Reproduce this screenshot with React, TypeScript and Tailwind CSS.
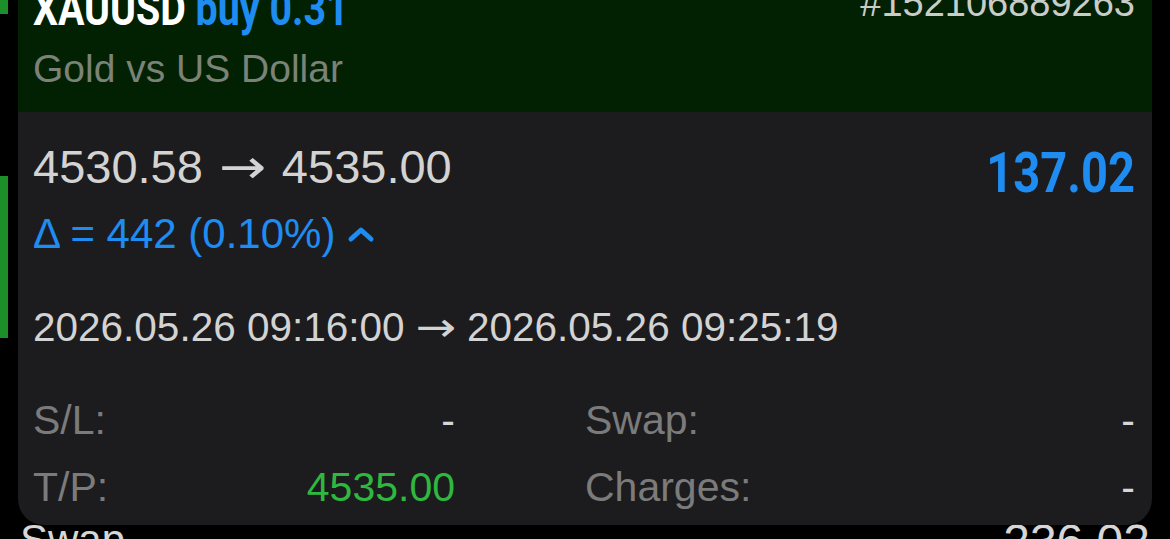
const SANS = "font-['Liberation_Sans',Arial,sans-serif]";
const COND = "font-['Roboto','Liberation_Sans',sans-serif] font-bold";

function Arrow({ width }: { width: string }) {
  return (
    <span className={`inline-block text-center font-['DejaVu_Sans',sans-serif] ${width}`}>
      <span className="inline-block scale-x-[1.2]">→</span>
    </span>
  );
}

function ChevronUp() {
  return (
    <svg width="28" height="18" viewBox="0 0 28 18" fill="none" aria-hidden="true">
      <polyline
        points="4,14 14,5 24,14"
        stroke="#1f8cf2"
        strokeWidth="5"
        strokeLinecap="round"
        strokeLinejoin="round"
      />
    </svg>
  );
}

interface DetailRowProps {
  label: string;
  value: string;
  valueClass?: string;
}

function DetailCell({ label, value, valueClass = "text-[#d6d6d6]" }: DetailRowProps) {
  return (
    <div className="flex h-[67px] items-center justify-between leading-[67px]">
      <span className="text-[#7b7b7b]">{label}</span>
      <span className={valueClass}>{value}</span>
    </div>
  );
}

function TradeCard() {
  return (
    <div className="absolute left-[18px] top-[-40px] w-[1134px] overflow-hidden rounded-b-[26px] bg-[#1c1c1e]">
      {/* Header */}
      <div className="flex flex-col bg-[#022102] pb-[21px] pl-[15px] pr-[17px] pt-[21px]">
        <div className="flex items-start justify-between">
          <div className={`${COND} h-[56px] origin-left scale-x-[0.82] whitespace-nowrap text-[48px] leading-[56px]`}>
            <span className="text-white">XAUUSD</span>{" "}
            <span className="text-[#1f8cf2]">buy 0.31</span>
          </div>
          <div className={`${SANS} text-[38px] leading-[44px] text-[#c9cdc8]`}>#152106889263</div>
        </div>
        <div className={`${SANS} mt-[10px] text-[39px] leading-[44px] text-[#7b8277]`}>Gold vs US Dollar</div>
      </div>

      {/* Body */}
      <div className={`${SANS} flex flex-col pb-[4px] pl-[15px] pr-[17px] pt-[29px]`}>
        <div className="flex items-start justify-between">
          <div className="flex flex-col">
            <div className="whitespace-nowrap text-[47px] leading-[52px] text-[#d3d3d3]">
              4530.58<Arrow width="w-[1.68em]" />4535.00
            </div>
            <div className="mt-[18px] flex items-center gap-[12px] text-[42px] leading-[46px] text-[#1f8cf2]">
              <span>Δ = 442 (0.10%)</span>
              <ChevronUp />
            </div>
          </div>
          <div className={`${COND} origin-right scale-x-[0.84] text-[56px] leading-[64px] text-[#1f8cf2]`}>137.02</div>
        </div>

        <div className="mt-[48px] whitespace-nowrap text-[40.5px] leading-[44px] text-[#d3d3d3]">
          2026.05.26 09:16:00<Arrow width="w-[1.54em]" />2026.05.26 09:25:19
        </div>

        <div className="mt-[38px] grid grid-cols-[422px_1fr] gap-x-[130px] text-[41px]">
          <DetailCell label="S/L:" value="-" />
          <DetailCell label="Swap:" value="-" />
          <DetailCell label="T/P:" value="4535.00" valueClass="text-[#2fb83f]" />
          <DetailCell label="Charges:" value="-" />
        </div>
      </div>
    </div>
  );
}

export default function App() {
  return (
    <div className="relative h-[539px] w-[1170px] overflow-hidden bg-black">
      {/* List behind the popup */}
      <div className="flex flex-col">
        <div className="h-[14px] w-[8px] bg-[#1a8f2a]" />
        <div className="h-[162px]" />
        <div className="h-[162px] w-[8px] bg-[#1a8f2a]" />
        <div className="h-[178px]" />
        <div className={`${SANS} flex items-start justify-between pl-[20px] pr-[20px] text-[#d6d6d6]`}>
          <span className="text-[42px] leading-[48px]">Swap</span>
          <span className="text-[48px] leading-[52px]">236.02</span>
        </div>
      </div>

      <TradeCard />
    </div>
  );
}
